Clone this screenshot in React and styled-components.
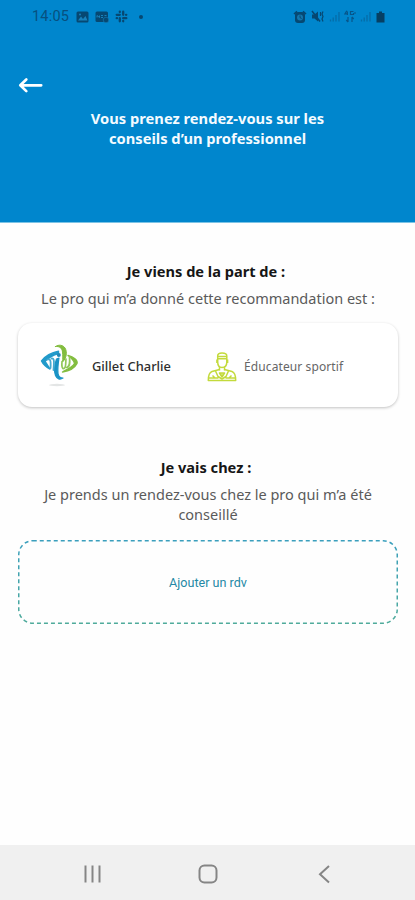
import React from 'react'
import styled, { createGlobalStyle } from 'styled-components';

const GlobalStyle = createGlobalStyle`
  * {
    box-sizing: border-box;
  }
  body {
    margin: 0;
    background: #fefefe;
    font-family: "Noto Sans", "Open Sans", sans-serif;
  }
`;

const Screen = styled.div`
  width: 415px;
  height: 900px;
  display: flex;
  flex-direction: column;
  overflow: hidden;
`;

const Header = styled.header`
  height: 223px;
  background: #0086cd;
  border-bottom: 1px solid #7cc3e5;
  flex: none;
`;

const StatusBar = styled.div`
  height: 33px;
  padding: 0 30px 0 32px;
  display: flex;
  align-items: center;
  justify-content: space-between;
  color: #07507f;
`;

const StatusGroup = styled.div`
  display: flex;
  align-items: center;
  gap: ${props => props.$gap}px;
`;

const Clock = styled.span`
  font-family: Roboto, sans-serif;
  font-size: 14.5px;
  line-height: 18px;
  letter-spacing: 0.2px;
  margin-right: 1px;
`;

const Dot = styled.span`
  width: 4px;
  height: 4px;
  margin-left: 5px;
  border-radius: 50%;
  background: #064872;
`;

const BackButton = styled.button`
  display: block;
  width: 26px;
  height: 20px;
  margin: 42px 0 0 18px;
  padding: 0;
  border: 0;
  background: none;
`;

const HeaderTitle = styled.h1`
  margin: 13px 0 0;
  font-size: 14.7px;
  line-height: 20px;
  font-weight: 700;
  color: #f4fbff;
  text-align: center;
`;

const Content = styled.main`
  flex: 1;
  padding: 38px 17px 0 18px;
`;

const SectionTitle = styled.h2`
  margin: 0;
  font-size: 14.6px;
  line-height: 20px;
  font-weight: 700;
  color: #161616;
  text-align: center;
  padding-right: 4px;
`;

const SectionText = styled.p`
  margin: 7px 0 0;
  font-size: 14.5px;
  line-height: 20px;
  color: #5a5a5a;
  text-align: center;
`;

const ProCard = styled.div`
  height: 84px;
  margin: 15px 0 50px;
  padding-left: 22px;
  display: flex;
  align-items: center;
  border-radius: 14px;
  background: #fff;
  box-shadow: 0 1px 3px rgba(0, 0, 0, 0.24);
`;

const ProName = styled.div`
  width: 115px;
  margin-left: 12px;
  padding-top: 1px;
  font-size: 12.9px;
  font-weight: 500;
  color: #2d2d2d;
  white-space: nowrap;
`;

const ProJob = styled.div`
  margin-left: 7px;
  padding-top: 2px;
  font-size: 12px;
  letter-spacing: 0.1px;
  color: #666;
  white-space: nowrap;
`;

const AddButton = styled.button`
  position: relative;
  width: 380px;
  height: 84px;
  margin-top: 16px;
  padding: 1px 0 0;
  display: flex;
  align-items: center;
  justify-content: center;
  border: 0;
  background: none;
  font-family: Roboto, sans-serif;
  font-size: 12.6px;
  color: #2589a5;
`;

const DashedOutline = styled.svg`
  position: absolute;
  inset: 0;
`;

const NavBar = styled.nav`
  height: 55px;
  flex: none;
  display: flex;
  align-items: center;
  justify-content: space-between;
  padding: 3px 79px 0 80px;
  background: #f0f0f0;
`;

const NavIcon = styled.svg`
  width: 24px;
  height: 24px;
  fill: none;
  stroke: #858585;
  stroke-width: 2;
`;

const PictureIcon = () => (
  <svg width="13" height="12" viewBox="0 0 13 12">
    <rect x="0.5" y="0.5" width="12" height="11" rx="1.5" fill="#064872" />
    <path d="M2 9.5 5 5.5 7 8 9.5 5 11.5 9.5Z" fill="#1781bb" />
    <circle cx="4" cy="3.5" r="1" fill="#1781bb" />
  </svg>
);

const NewsIcon = () => (
  <svg width="14" height="12" viewBox="0 0 14 12">
    <rect x="0.5" y="0.5" width="12.5" height="10.5" rx="1.5" fill="#064872" />
    <path d="M2 6.5V4.5L4.5 6.5V4.5M6 4.5H8M6 6.5H8M9.5 4.5H11.5" stroke="#1781bb" fill="none" />
    <circle cx="11" cy="9" r="2.8" fill="#064872" stroke="#1781bb" strokeWidth="0.6" />
  </svg>
);

const SlackIcon = () => (
  <svg width="13" height="13" viewBox="0 0 13 13" fill="none" stroke="#064872" strokeWidth="2.3" strokeLinecap="round">
    <path d="M4.8 1.7V2M1.7 4.8H4.8M8.2 1.7V4.8M11 4.8H11.3M1.7 8.2H2M4.8 8.2V11.3M8.2 11V11.3M8.2 8.2H11.3" />
  </svg>
);

const AlarmIcon = () => (
  <svg width="14" height="14" viewBox="0 0 14 14">
    <path d="M1 4 4 1.3M13 4 10 1.3" stroke="#064872" strokeWidth="1.6" />
    <rect x="2" y="2" width="10" height="11" rx="3" fill="#064872" />
    <circle cx="7" cy="7.5" r="3" fill="#1477ad" />
    <path d="M7 5.5V7.6L8.6 8.5" stroke="#064872" fill="none" />
  </svg>
);

const MuteIcon = () => (
  <svg width="14" height="13" viewBox="0 0 14 13">
    <path d="M1 4.5H3.5L7 1.5V11.5L3.5 8.5H1Z" fill="#064872" />
    <path d="M1 1 9 11.5" stroke="#064872" strokeWidth="1.6" />
    <path d="M9.5 2V6M12 1.5 11 4 12 6.5 11 9 12 11.5" stroke="#064872" strokeWidth="1.2" fill="none" />
  </svg>
);

const SignalIcon = () => (
  <svg width="12" height="11" viewBox="0 0 12 11" stroke="#07649b" strokeWidth="1.3" opacity="0.75">
    <path d="M1.5 10.5V8.5M4.2 10.5V6.5M7 10.5V4M10 10.5V1" />
  </svg>
);

const DataIcon = () => (
  <svg width="12" height="13" viewBox="0 0 12 13" fill="none" stroke="#07568a" strokeWidth="1.2">
    <path d="M2.8 0.8 1 3.8H4M3.4 1.5V5M9.5 1.5H6.5V4.5H9.5V3M4 7V12M2.3 10 4 12M8 12V7M9.7 9 8 7M10 3H12" />
  </svg>
);

const BatteryIcon = () => (
  <svg width="9" height="12" viewBox="0 0 9 12" fill="#063f63">
    <path d="M3 0.5H6V2H8.5V11.5H0.5V2H3Z" />
  </svg>
);

// four swooshes around two small figures, with a soft shadow under them
const ProLogo = () => (
  <svg width="40" height="46" viewBox="0 0 40 46" fill="none" strokeLinecap="round" strokeLinejoin="round">
    <ellipse cx="17" cy="43" rx="8" ry="1.2" fill="#e3e5e5" />
    <path d="M15.5 4.5C19.5 4 22 6 22.5 10 22.8 13.5 23 16.5 22.5 20 26.5 16.5 27.5 10 25 6 23 3 19 2.2 15.5 4.5Z" fill="#83bd3f" stroke="#83bd3f" strokeWidth="1" />
    <path d="M28 13.5C33.5 15 38 18 37 21.5 35 25.5 29.5 29 22.5 30 28 27 33 24.5 34.5 21.5 34 18.5 31.5 16 28 13.5Z" fill="#83bd3f" stroke="#83bd3f" strokeWidth="1.4" />
    <path d="M18.5 9.3C12 10.5 5 14.5 1.5 19 3 22 6 25 10 27 8 24 6.5 21.5 5 19.2 8.5 15.8 13.5 13 18.5 11.5Z" fill="#219aca" stroke="#219aca" strokeWidth="1.4" />
    <path d="M16.5 17C14.5 23 13.8 29 15.5 33.5 17 37 20 38 23 36 20 36 18.5 34.5 18 31.5 17.5 27 18 22.5 19 16Z" fill="#1a93c5" stroke="#1a93c5" strokeWidth="1.2" />
    <path d="M7.5 17.5C10.5 16.5 11 19 10.5 26M11.5 16.5C14.5 16 14.2 20 13.5 28" stroke="#43a9d0" strokeWidth="1.8" />
    <circle cx="18.8" cy="13" r="2" fill="#2189b8" />
    <path d="M22 19.5C21.5 24 22 27 24 26.5 26.3 25.5 25.5 21 26 17M26.5 25.5C30 25 30 21 29.5 15" stroke="#92c85a" strokeWidth="1.7" />
  </svg>
);

const CoachIcon = () => (
  <svg width="30" height="34" viewBox="0 -4 30 34" fill="none" stroke="#c3da3c" strokeWidth="1.5" strokeLinejoin="round">
    <path d="M10.7 10V4C10.7 2 12.5 1 15 1S19.8 2 19.8 4V10C19.8 13.5 18 15.5 15 15.5S10.7 13.5 10.7 10Z" />
    <path d="M10.7 4.5H19.8M10.7 6.7H19.8M9.9 7.5V11M20.6 7.5V11" />
    <path d="M12.5 15V18.5M17.5 18.5V15" />
    <path d="M12.5 17.5 5 19.5C2 20.5 1.3 23 1.3 28.5H28.7C28.7 23 28 20.5 25 19.5L17.5 17.5" />
    <path d="M8.5 19 11 24.5 15 27 19 24.5 21.5 19M5.5 23.5 8 26H11.5M24.5 23.5 22 26H18.5M1 26H8M29 26H22" />
    <path d="M12.5 21H17.5L15 25Z" fill="#d8e77f" />
  </svg>
);

const App = () => (
  <Screen>
    <GlobalStyle />
    <Header>
      <StatusBar>
        <StatusGroup $gap={6}>
          <Clock>14:05</Clock>
          <PictureIcon />
          <NewsIcon />
          <SlackIcon />
          <Dot />
        </StatusGroup>
        <StatusGroup $gap={3.8}>
          <AlarmIcon />
          <MuteIcon />
          <SignalIcon />
          <DataIcon />
          <SignalIcon />
          <BatteryIcon />
        </StatusGroup>
      </StatusBar>
      <BackButton aria-label="Retour">
        <svg width="26" height="20" viewBox="0 0 26 20" fill="none" stroke="#fff" strokeWidth="2.7" strokeLinecap="round" strokeLinejoin="round">
          <path d="M23.2 10.3H2.5M8.3 4.5 2.3 10.3 8.3 16.1" />
        </svg>
      </BackButton>
      <HeaderTitle>
        Vous prenez rendez-vous sur les<br />conseils d’un professionnel
      </HeaderTitle>
    </Header>

    <Content>
      <SectionTitle>Je viens de la part de :</SectionTitle>
      <SectionText>Le pro qui m’a donné cette recommandation est :</SectionText>
      <ProCard>
        <ProLogo />
        <ProName>Gillet Charlie</ProName>
        <CoachIcon />
        <ProJob>Éducateur sportif</ProJob>
      </ProCard>

      <SectionTitle>Je vais chez :</SectionTitle>
      <SectionText>
        Je prends un rendez-vous chez le pro qui m’a été<br />conseillé
      </SectionText>
      <AddButton>
        <DashedOutline width="380" height="84" fill="none">
          <defs>
            <linearGradient id="outline" x1="0" y1="0" x2="0" y2="1">
              <stop offset="0" stopColor="#3a9fbd" />
              <stop offset="1" stopColor="#4fab9b" />
            </linearGradient>
          </defs>
          <rect x="0.75" y="0.75" width="378.5" height="82.5" rx="14" stroke="url(#outline)" strokeWidth="1.5" strokeDasharray="4 3" />
        </DashedOutline>
        Ajouter un rdv
      </AddButton>
    </Content>

    <NavBar>
      <NavIcon viewBox="0 0 24 24"><path d="M5.5 3.5V20.5M12.5 3.5V20.5M19.5 3.5V20.5" /></NavIcon>
      <NavIcon viewBox="0 0 24 24"><rect x="3.5" y="3.5" width="17" height="17" rx="5" /></NavIcon>
      <NavIcon viewBox="0 0 24 24"><path d="M17 4 8 12.2 17 20.5" /></NavIcon>
    </NavBar>
  </Screen>
);

export default App;
